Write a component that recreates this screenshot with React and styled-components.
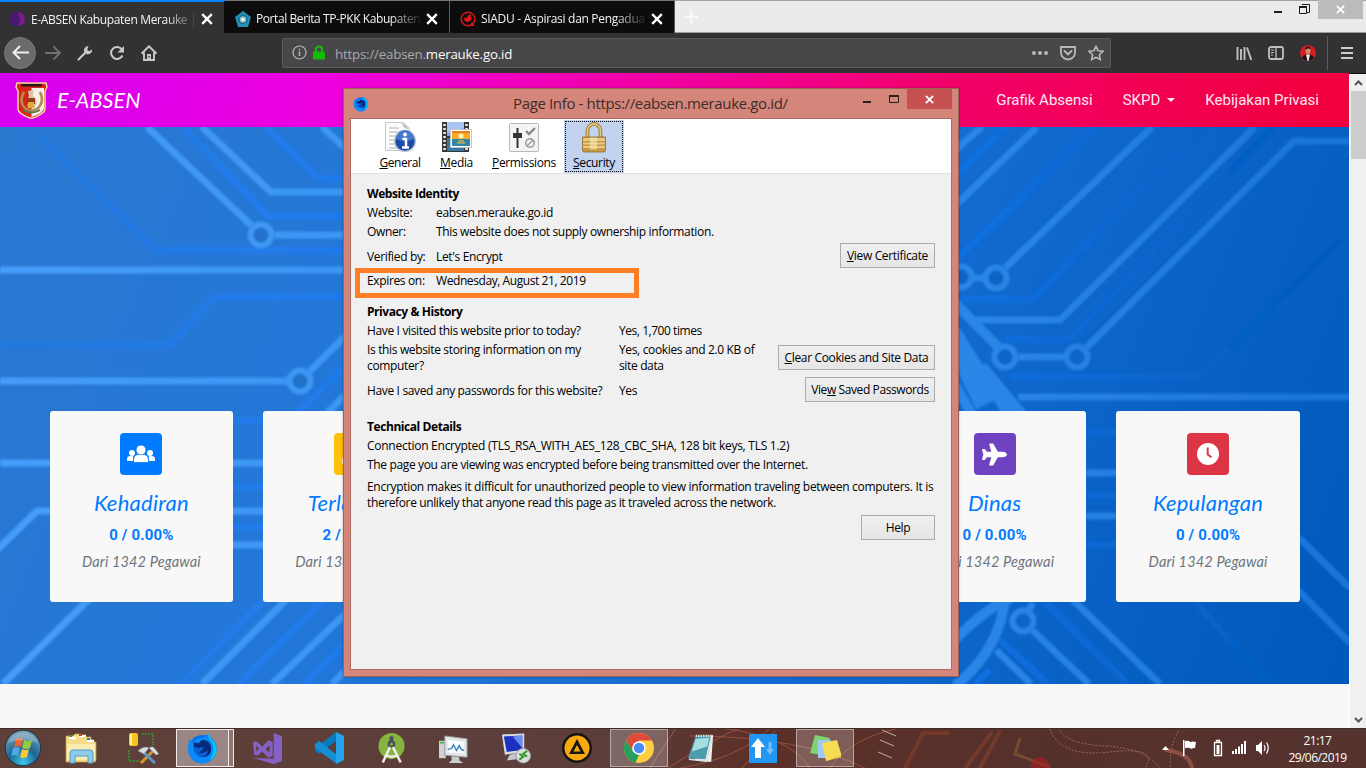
import React from "react";
import styled, { createGlobalStyle, css } from "styled-components";
import { FaPlane, FaUserClock } from "react-icons/fa";

const UI = `"Open Sans", "Noto Sans", sans-serif`;
const HAND = `Lato, "Open Sans", sans-serif`;

const Global = createGlobalStyle`
  * { box-sizing: border-box; }
  body { margin: 0; overflow: hidden; font-family: ${UI}; }
`;

const Screen = styled.div`
  position: relative;
  width: 1366px;
  height: 768px;
  display: flex;
  flex-direction: column;
  overflow: hidden;
  background: #f8f8f8;
`;

/* ---------- browser chrome ---------- */
const TabStrip = styled.header`
  height: 33px;
  display: flex;
  background: #ebebeb;
  border-top: 1px solid #a2a2a2;
  border-bottom: 1px solid #9d9d9d;
`;
const Tab = styled.div`
  width: 225px;
  height: 33px;
  margin-top: -1px;
  padding: 3px 10px 0 10px;
  display: flex;
  align-items: center;
  color: #f4f4f4;
  background: ${(p) => (p.$active ? "#323234" : "#0c0c0d")};
  border-top: ${(p) => (p.$active ? "2px solid #0a84ff" : "1px solid #777")};
  border-right: 1px solid ${(p) => (p.$active ? "#0c0c0d" : "#5a5a5c")};
`;
const TabTitle = styled.span`
  width: 167px;
  margin-left: 5px;
  overflow: hidden;
  white-space: nowrap;
  font-size: 12px;
  letter-spacing: ${(p) => p.$ls || "-0.35px"};
  mask-image: linear-gradient(90deg, #000 80%, transparent 100%);
`;
const TabClose = styled.span`
  display: flex;
  margin-left: 3px;
  flex: none;
`;
const NewTab = styled.div`
  width: 32px;
  display: flex;
  align-items: center;
  justify-content: center;
`;
const WindowButtons = styled.div`
  margin-left: auto;
  height: 19px;
  margin-top: -1px;
  display: flex;
`;
const WinClose = styled.div`
  width: 45px;
  margin-right: 3px;
  display: flex;
  align-items: center;
  justify-content: center;
  background: #bcbcbc;
`;
const WinGlyphs = styled.svg`
  margin-right: 8px;
`;

const Toolbar = styled.nav`
  height: 41px;
  flex: none;
  display: flex;
  align-items: center;
  padding: 0 11px 1px 4px;
  background: #323234;
  border-bottom: 1px solid #0c0c0d;
`;
const BackButton = styled.div`
  width: 32px;
  height: 32px;
  border-radius: 50%;
  display: flex;
  align-items: center;
  justify-content: center;
  background: #6b6b6c;
  border: 1px solid #7a7a7b;
`;
const ToolIcon = styled.svg`
  width: 16px;
  height: 16px;
  flex: none;
  margin-left: ${(p) => p.$gap || 16}px;
`;
const UrlBar = styled.div`
  width: 829px;
  height: 30px;
  margin-left: 125px;
  padding: 0 6px 0 9px;
  display: flex;
  align-items: center;
  border: 1px solid #5a5a5c;
  border-radius: 2px;
  background: #474749;
`;
const Lock = styled.svg`
  margin-left: 4px;
`;
const Url = styled.span`
  margin: 0 auto 0 10px;
  padding-top: 2px;
  font-size: 13.3px;
  letter-spacing: -0.2px;
  color: #a9a9ab;
  b { font-weight: 400; color: #fafafa; }
`;
const Divider = styled.i`
  width: 1px;
  height: 34px;
  margin-left: 11px;
  background: #5b5b5d;
`;
const RightTools = styled.div`
  margin-left: auto;
  display: flex;
  align-items: center;
`;

/* ---------- web page ---------- */
const Viewport = styled.div`
  height: 654px;
  display: flex;
`;
const Page = styled.main`
  width: 1349px;
  display: flex;
  flex-direction: column;
  margin-top: -1px;
`;
const SiteNav = styled.div`
  height: 54px;
  padding: 0 30px 0 15px;
  display: flex;
  align-items: center;
  color: #fff;
  background: linear-gradient(100deg, #d500f0 0%, #ee00e0 24%, #f2009c 52%, #f2006a 70%, #f20040 97%);
`;
const Brand = styled.span`
  margin-left: 9px;
  font: italic 400 21.5px ${HAND};
  letter-spacing: 0.1px;
`;
const NavLink = styled.span`
  font: 400 15px Roboto, sans-serif;
  margin-left: ${(p) => p.$gap || 0}px;
  color: #ffe8f0;
`;
const Links = styled.div`
  margin-left: auto;
  display: flex;
  align-items: center;
`;
const Caret = styled.i`
  margin-left: 7px;
  border: 4px solid transparent;
  border-top-color: #ffe8f0;
  border-bottom: 0;
`;
const Hero = styled.section`
  position: relative;
  height: 557px;
  padding: 284px 49.3px 0 49.7px;
  background: linear-gradient(112deg, #2a78d0 0%, #2277d9 32%, #1269cf 65%, #0058ba 100%);
`;
const Circuit = styled.svg`
  position: absolute;
  inset: 0;
`;
const Cards = styled.div`
  position: relative;
  display: grid;
  grid-template-columns: repeat(6, 1fr);
  gap: 30px;
`;
const Card = styled.article`
  height: 191px;
  padding-top: 22px;
  display: flex;
  flex-direction: column;
  align-items: center;
  white-space: nowrap;
  border-radius: 3px;
  background: #f8f8f8;
`;
const CardIcon = styled.div`
  width: 42px;
  height: 42px;
  display: flex;
  align-items: center;
  justify-content: center;
  border-radius: 4px;
  color: #fff;
  background: ${(p) => p.$color};
`;
const CardTitle = styled.h3`
  margin: 14px 0 0;
  font: italic 400 22px/28px ${HAND};
  letter-spacing: 0.25px;
  color: #007bff;
`;
const CardValue = styled.p`
  margin: 6px 0 0;
  font: 700 15px/24px Roboto, sans-serif;
  letter-spacing: 0.15px;
  color: #007bff;
`;
const CardNote = styled.p`
  margin: 3px 0 0;
  font: italic 400 14.5px/24px ${HAND};
  letter-spacing: 0.15px;
  color: #6c757d;
`;
const Scrollbar = styled.div`
  width: 17px;
  display: flex;
  flex-direction: column;
  align-items: center;
  padding: 0 1px;
  background: #f0f0f0;
  border-left: 1px solid #fff;
`;
const Thumb = styled.div`
  width: 15px;
  height: 68px;
  background: #cdcdcd;
`;
const ScrollArrow = styled.svg`
  width: 15px;
  height: 17px;
  margin-top: ${(p) => (p.$end ? "auto" : 0)};
`;

/* ---------- dialog ---------- */
const Dialog = styled.section`
  position: absolute;
  left: 343px;
  top: 88px;
  width: 616px;
  height: 589px;
  padding: 0 6px 6px;
  display: flex;
  flex-direction: column;
  border: 1px solid #9d625a;
  background: #d5867a;
  box-shadow: 0 0 2px #0005;
`;
const TitleBar = styled.div`
  height: 29px;
  display: flex;
  align-items: flex-start;
  padding-left: 3px;
`;
const TitleIcon = styled.svg`
  width: 16px;
  height: 16px;
  margin-top: 7px;
`;
const DialogTitle = styled.h1`
  flex: 1;
  margin: 0;
  padding-left: 144px;
  font: 400 15px/29px ${UI};
  letter-spacing: -0.36px;
  white-space: nowrap;
  color: #3d2c2a;
`;
const DialogGlyphs = styled.svg`
  margin-right: 7px;
`;
const DialogClose = styled.div`
  width: 45px;
  height: 20px;
  display: flex;
  align-items: center;
  justify-content: center;
  background: #c75050;
`;
const Client = styled.div`
  flex: 1;
  border: 1px solid #ae6b62;
  background: #f0f0f0;
`;
const Categories = styled.div`
  height: 55px;
  padding: 1px 0 0 20px;
  display: flex;
  background: #fff;
  border-bottom: 1px solid #e0e0e0;
`;
const Category = styled.div`
  width: ${(p) => p.$w}px;
  height: 53px;
  padding-top: 1px;
  display: flex;
  flex-direction: column;
  align-items: center;
  font-size: 12px;
  line-height: 20px;
  letter-spacing: ${(p) => p.$ls || "-0.35px"};
  ${(p) =>
    p.$active &&
    css`
      background: #c2d3ef;
      outline: 1px dotted #000;
      outline-offset: -2px;
    `}
`;
const CategoryIcon = styled.svg`
  width: 32px;
  height: 32px;
`;
const Details = styled.div`
  padding: 10px 16px 0;
  display: flex;
  flex-direction: column;
  font-size: 12px;
  line-height: 16px;
  letter-spacing: -0.35px;
  color: #000;
`;
const Heading = styled.h2`
  height: 20px;
  margin: ${(p) => p.$gap || 0}px 0 0;
  font: 700 12px/20px ${UI};
  letter-spacing: -0.43px;
`;
const Row = styled.div`
  height: ${(p) => p.$h}px;
  display: flex;
  align-items: center;
  letter-spacing: ${(p) => p.$ls || "inherit"};
`;
const Label = styled.span`
  width: ${(p) => p.$w || 69}px;
  padding-top: ${(p) => p.$drop || 0}px;
  flex: none;
`;
const Value = styled.span`
  max-width: 145px;
  padding-top: ${(p) => p.$drop || 0}px;
  letter-spacing: ${(p) => p.$ls || "inherit"};
  white-space: nowrap;
`;
const Button = styled.button`
  width: ${(p) => p.$w}px;
  height: 25px;
  margin: ${(p) => p.$mt ?? -2}px 0 0 auto;
  padding: 0;
  border: 1px solid #acacac;
  background: linear-gradient(#f0f0f0, #e5e5e5);
  font: 400 12px ${UI};
  letter-spacing: ${(p) => p.$ls || "-0.33px"};
  white-space: nowrap;
  color: #000;
`;
const Paragraph = styled.p`
  margin: 4px 0;
  white-space: nowrap;
`;
const Line = styled.span`
  display: block;
  letter-spacing: ${(p) => p.$ls};
`;
const Highlight = styled.div`
  position: absolute;
  left: 11px;
  top: 179px;
  width: 284px;
  height: 30px;
  border: 5px solid #ff7f27;
`;

/* ---------- taskbar ---------- */
const Taskbar = styled.footer`
  position: relative;
  height: 40px;
  flex: none;
  display: flex;
  align-items: center;
  background: linear-gradient(90deg, #5f4039, #5b3d3a 45%, #5c3028 55%, #56302b 75%, #55332f);
`;
const Wallpaper = styled.svg`
  position: absolute;
  inset: 0;
`;
const Start = styled.svg`
  position: relative;
  margin-left: 4px;
  flex: none;
`;
const Tasks = styled.div`
  position: relative;
  margin-left: 8px;
  display: flex;
`;
const Task = styled.div`
  width: 58px;
  height: 38px;
  margin: 0 2px;
  display: flex;
  align-items: center;
  justify-content: center;
  border: 1px solid transparent;
  ${(p) =>
    p.$open &&
    css`
      background: #ffffff38;
      border-color: #ffffff70;
    `}
  ${(p) =>
    p.$current &&
    css`
      padding-right: 5px;
      background: #ffffff60;
      border-color: #f2eceb;
      box-shadow: inset -4px 0 0 #8d7774, inset -5px 0 0 #f2eceb;
    `}
`;
const Tray = styled.svg`
  position: relative;
  margin-left: auto;
`;
const Clock = styled.div`
  position: relative;
  width: 97px;
  padding-top: 2px;
  text-align: center;
  color: #fff;
  font-size: 12px;
  line-height: 17px;
  letter-spacing: -0.55px;
`;

const X = ({ size = 9, width = 2, color = "#fff" }) => (
  <svg width={size} height={size} viewBox="0 0 10 10">
    <path d="M1 1l8 8M9 1l-8 8" stroke={color} strokeWidth={width} />
  </svg>
);

const Key = ({ children }) => <u>{children}</u>;

const PeopleIcon = () => (
  <svg width="28" height="18" viewBox="0 0 28 18" fill="#fff">
    <circle cx="5" cy="8" r="3" /><circle cx="23" cy="8" r="3" />
    <path d="M0 16v-2q0-3 3.500-3H6v5zM28 16v-2q0-3-3.500-3H22v5z" />
    <path d="M6.500 17.500v-3q0-4.500 4-5h7q4 .5 4 5v3z" stroke="#007bff" strokeWidth=".8" />
    <circle cx="14" cy="5" r="4.800" stroke="#007bff" strokeWidth=".5" />
  </svg>
);

const ClockIcon = () => (
  <svg width="22" height="22" viewBox="0 0 22 22">
    <circle cx="11" cy="11" r="11" fill="#fff" />
    <path d="M10.700 4.500v7l3.800 2.700" fill="none" stroke="#dc3545" strokeWidth="2" />
  </svg>
);

const FirefoxMark = () => (
  <>
    <circle cx="16" cy="17" r="14.500" fill="#0a6fe8" />
    <path d="M22 1c1 6 9 8 8.500 17C30 27 23 32 16 32 8 32 1 26 1 17L2 7l4 3c3-4 7-5 10-4z" fill="#0b8bfb" />
    <path d="M7 10l5 1 3-3c6-1 10 3 10 9s-5 9-10 8c-6-1-9-6-8-15z" fill="#062a7c" />
    <path d="M7 15l5 1 5-1-1 3-4 2q2 3 6 0l4-1c-2 6-8 7-12 4-2-2-3-5-3-8z" fill="#0b62d8" />
    <path d="M22 1c1 6 9 8 8.500 17-.5 5-3 9-7 11 4-7 5-14 2-19-3-4-4-5-3.500-9z" fill="#00c8ff" />
  </>
);

function CircuitLines() {
  const dots = [[261, 235], [300, 381], [961, 277], [996, 278], [1005, 357], [1077, 357], [1023, 621]];
  return (
    <Circuit width="1349" height="557" viewBox="0 127 1349 557" fill="none">
      <defs>
        <linearGradient id="trace" gradientUnits="userSpaceOnUse" x1="0" y1="0" x2="1349" y2="0">
          <stop offset="0" stopColor="#469dfa" />
          <stop offset="0.25" stopColor="#3d96f3" />
          <stop offset="0.75" stopColor="#2a85e6" />
          <stop offset="1" stopColor="#1b73d8" />
        </linearGradient>
        <linearGradient id="under" gradientUnits="userSpaceOnUse" x1="0" y1="0" x2="1349" y2="0">
          <stop offset="0" stopColor="#2277dd" />
          <stop offset="0.2" stopColor="#217bec" />
          <stop offset="0.72" stopColor="#1170e0" />
          <stop offset="1" stopColor="#0259bb" />
        </linearGradient>
        <filter id="soft" x="-5%" y="-5%" width="110%" height="110%"><feGaussianBlur stdDeviation="1" /></filter>
      </defs>
      <g stroke="url(#under)" strokeWidth="7" filter="url(#soft)">
        <path d="M183 127L268 216H345M266 127L318 178H345M40 137L155 250H345M0 345.100H170L213 297H345" />
        <path d="M298 412L345 366M233 421H263.100L264 421.100M233 487H263L264 487.100M233 527H263L264 527.100M266 598L180 684M323 600L238 684M345 644L305 684" />
        <path d="M955 176L1006 127M955 261L1094 127M959 299.100H1032L1203 127M1005 339.100H1070L1273 127M1010 377.100H1200L1340 240" />
        <path d="M1086 432H1116L1117 432.100M1086 495H1116L1117 495.100M1086 545H1116L1117 545.100M1045 602L1128 684M1000 640L1048 684M1195 602L1270 684M975 684L990 670" />
      </g>
      <g stroke="url(#trace)" strokeWidth="7" filter="url(#soft)">
        <path d="M147 127L252 226M274 235H345L346 235.100M202 127L271 192H345M322 127L345 148M0 270H345L346 270.100M0 381H288L289 381.100M309 372L345 336M327 413L345 395" />
        <path d="M0 463H345L346 463.100M-4 551L37 511H345M150 545H345L346 545.100M90 598L3 684M288 598L202 684M345 614L272 684M345 671L332 684" />
        <path d="M955 150L982 127M955 206L1037 127M1005 268L1152 127M970 278H986L987 278.100M975 320.100H1060L1255 127M1018 357H1065L1066 357.100M1086 348L1294 141H1349M1018 397H1349L1349 397.100" />
        <path d="M1086 473H1116L1117 473.100M1086 516H1116L1117 516.100M1298 537L1350 588M1298 590L1350 643M1033 603L1028 611M1032 630L1089 684M1073 600L1160 684M996 650L1031 684" />
      </g>
      <g stroke="url(#trace)" strokeWidth="10" filter="url(#soft)">
        <path d="M955 303L1000 349M955 330L1012 420M982 366L1027 420M955 385L975 420M1012 598Q985 608 955 640M1005 598Q1000 650 955 686" />
        <path d="M955 342L985 405" strokeWidth="20" />
      </g>
      <g stroke="url(#trace)" strokeWidth="6" filter="url(#soft)">
        {dots.map(([x, y]) => (
          <circle key={`${x}-${y}`} cx={x} cy={y} r="10.500" fill={x < 400 ? "#2171cb" : "#0d64c6"} />
        ))}
      </g>
    </Circuit>
  );
}

const cards = [
  { title: "Kehadiran", value: "0 / 0.00%", color: "#007bff", icon: <PeopleIcon /> },
  { title: "Terlambat", value: "2 / 0.15%", color: "#ffc107", icon: <FaUserClock size={26} /> },
  null,
  null,
  { title: "Dinas", value: "0 / 0.00%", color: "#6f42c1", icon: <FaPlane size={25} /> },
  { title: "Kepulangan", value: "0 / 0.00%", color: "#dc3545", icon: <ClockIcon /> },
];

function BrowserTop() {
  return (
    <>
      <TabStrip>
        <Tab $active>
          <svg width="16" height="16"><circle cx="7" cy="8" r="7.500" fill="#47186e" /><path d="M8 1a7 7 0 0 1 0 14c4-5 1-8 0-14" fill="#7c1c8c" /></svg>
          <TabTitle>E-ABSEN Kabupaten Merauke |</TabTitle>
          <TabClose><X size={12} /></TabClose>
        </Tab>
        <Tab>
          <svg width="16" height="16"><path d="M8 0l8 6-3 10H3L0 6z" fill="#2490b5" /><circle cx="8" cy="8.500" r="4" fill="#8bc6c4" stroke="#1a6791" strokeWidth="1.500" /><circle cx="8" cy="8.500" r="1.500" fill="#fff" /></svg>
          <TabTitle $ls="-0.42px">Portal Berita TP-PKK Kabupaten</TabTitle>
          <TabClose><X size={12} /></TabClose>
        </Tab>
        <Tab>
          <svg width="16" height="16"><circle cx="8" cy="8" r="6.800" fill="none" stroke="#d51518" strokeWidth="1.500" /><path d="M4 6c1 2 3 1 4-1 2-3 4-1 3 0 1 2 1 5-3 6-3 0-4-2-4-5zM11 11l4 4h-4z" fill="#e31519" /></svg>
          <TabTitle $ls="-0.3px">SIADU - Aspirasi dan Pengadua</TabTitle>
          <TabClose><X size={12} /></TabClose>
        </Tab>
        <NewTab><svg width="14" height="14"><path d="M7 0v14M0 7h14" stroke="#fafafa" strokeWidth="2" /></svg></NewTab>
        <WindowButtons>
          <WinGlyphs width="38" height="19" fill="none" stroke="#1c1c1c">
            <path d="M2 12h8" strokeWidth="2" />
            <path d="M30 5V4.500h7.500v8H35" /><path d="M27.500 7.500h7v6h-7z" /><path d="M27 7h8" strokeWidth="2" />
          </WinGlyphs>
          <WinClose><X size={9} /></WinClose>
        </WindowButtons>
      </TabStrip>
      <Toolbar>
        <BackButton>
          <svg width="17" height="15" fill="none" stroke="#f0f0f0" strokeWidth="2"><path d="M1 7.500h16M8 1L1.500 7.500 8 14" /></svg>
        </BackButton>
        <ToolIcon $gap={9} viewBox="0 0 16 16" fill="none" stroke="#727274" strokeWidth="1.800"><path d="M0 8h15M8.500 1.500L15 8l-6.500 6.500" /></ToolIcon>
        <ToolIcon viewBox="0 0 16 16"><path d="M1.500 14.500L8.500 7.500" stroke="#c9c9ca" strokeWidth="2.200" strokeLinecap="round" /><path d="M11.500 1A4.500 4.500 0 0 0 7 6.500L9.500 9A4.500 4.500 0 0 0 15.300 4.500L12.500 6 10.500 5.500V3.500z" fill="#c9c9ca" /></ToolIcon>
        <ToolIcon viewBox="0 0 16 16" fill="none" stroke="#c9c9ca" strokeWidth="2"><path d="M13.500 10.500a6 6 0 1 1-.5-6" /><path d="M15 1v6.500H8.500z" fill="#c9c9ca" stroke="none" /></ToolIcon>
        <ToolIcon viewBox="0 0 16 16" fill="none" stroke="#c9c9ca" strokeWidth="1.900"><path d="M.5 8.700L8 1.300l7.500 7.400M3 7.500V15h10V7.500" /><path d="M6 9h4v6H6z" fill="#c9c9ca" stroke="none" /><path d="M8 11v1.500" stroke="#323234" strokeWidth="1.300" /></ToolIcon>
        <UrlBar>
          <svg width="15" height="15" fill="none" stroke="#b9b9ba" strokeWidth="1.200"><circle cx="7.500" cy="7.500" r="6.500" /><path d="M7.500 6.500V11M7.500 3.800v1.500" strokeWidth="1.500" /></svg>
          <Lock width="14" height="15"><path d="M5 7V4.500a3 3 0 0 1 6 0V7" fill="none" stroke="#12bc00" strokeWidth="2" /><rect x="2" y="6.500" width="12" height="8" rx="1" fill="#12bc00" /></Lock>
          <Url>https://eabsen.<b>merauke.go.id</b></Url>
          <ToolIcon viewBox="0 0 16 16" fill="#b8b8b9"><circle cx="2" cy="8" r="2" /><circle cx="8" cy="8" r="2" /><circle cx="14" cy="8" r="2" /></ToolIcon>
          <ToolIcon $gap={12} viewBox="0 0 16 16" fill="none" stroke="#b8b8b9" strokeWidth="1.800"><path d="M1 2h14v5.500a7 7 0 0 1-14 0z" /><path d="M4.500 6L8 9.300 11.500 6" strokeWidth="2" strokeLinecap="round" /></ToolIcon>
          <ToolIcon $gap={12} viewBox="0 0 16 16" fill="none" stroke="#b8b8b9" strokeWidth="1.600"><path d="M8 1.300l2.100 4.400 4.900.6-3.600 3.400.9 4.900L8 12.200l-4.300 2.400.9-4.900L1 6.300l4.900-.6z" /></ToolIcon>
        </UrlBar>
        <RightTools>
          <ToolIcon viewBox="0 0 16 16" fill="none" stroke="#c0c0c2" strokeWidth="1.900"><path d="M1.500 2v13M5 4v11M8.500 2v13M11 2.500L15.300 15" /></ToolIcon>
          <ToolIcon viewBox="0 0 16 16" fill="none" stroke="#c0c0c2" strokeWidth="1.800"><rect x="1" y="2" width="14" height="12" rx="2" /><path d="M8 2v12" strokeWidth="1.300" /><path d="M3 5h3M3 7.500h3M3 10h2" strokeWidth="1" /></ToolIcon>
          <ToolIcon viewBox="0 0 16 16"><circle cx="8" cy="8" r="8" fill="#d51d20" /><path d="M2 13Q3 10 6 9.500h4q3 .5 4 3.500-6 6-12 0" fill="#171516" /><path d="M6 9.500h4L8.500 16h-1z" fill="#eee" /><ellipse cx="8" cy="5.500" rx="2.500" ry="3.500" fill="#cc8d6b" /><path d="M5.300 5C5 0 11 0 10.700 5 10 3 7 3 5.300 5" fill="#181214" /></ToolIcon>
          <Divider />
          <ToolIcon $gap={11} viewBox="0 0 16 16"><path d="M2 3h12M2 8h12M2 13h12" stroke="#cdcdce" strokeWidth="1.900" /></ToolIcon>
        </RightTools>
      </Toolbar>
    </>
  );
}

function WebPage() {
  return (
    <Viewport>
      <Page>
        <SiteNav>
          <svg width="33" height="37" viewBox="0 0 33 37">
            <path d="M2 1h29l1 4-2 4v18q0 5-13.500 9.500Q3 32 3 27V9L1 5z" fill="#d9241b" stroke="#f3d3a4" strokeWidth="1.500" />
            <path d="M16.500 6H29v20q0 5-12.500 9z" fill="#f5efe8" />
            <path d="M6 2h21v2.500H6z" fill="#261a12" />
            <path d="M9 10Q3 20 11 27l5 2 6-2Q30 20 25 10" fill="none" stroke="#b38b4b" strokeWidth="2.500" />
            <path d="M13 26q-2-8 1-12l-1-5 6-1q-3 4 1 8t-1 10z" fill="#d8c6a1" />
            <path d="M12 16h8v6h-8z" fill="#9b3a1a" /><path d="M13 20h6v6h-6z" fill="#e1ab38" />
            <path d="M8 28q8 5 17 0" fill="none" stroke="#5d7c4d" strokeWidth="2" />
          </svg>
          <Brand>E-ABSEN</Brand>
          <Links>
            <NavLink>Grafik Absensi</NavLink>
            <NavLink $gap={30}>SKPD</NavLink>
            <Caret />
            <NavLink $gap={30}>Kebijakan Privasi</NavLink>
          </Links>
        </SiteNav>
        <Hero>
          <CircuitLines />
          <Cards>
            {cards.map((c, i) =>
              c ? (
                <Card key={i}>
                  <CardIcon $color={c.color}>{c.icon}</CardIcon>
                  <CardTitle>{c.title}</CardTitle>
                  <CardValue>{c.value}</CardValue>
                  <CardNote>Dari 1342 Pegawai</CardNote>
                </Card>
              ) : (
                <Card key={i} />
              )
            )}
          </Cards>
        </Hero>
      </Page>
      <Scrollbar>
        <ScrollArrow><path d="M4 11l3.500-3.500L11 11" fill="none" stroke="#555" strokeWidth="2" /></ScrollArrow>
        <Thumb />
        <ScrollArrow $end><path d="M4 7l3.500 3.500L11 7" fill="none" stroke="#555" strokeWidth="2" /></ScrollArrow>
      </Scrollbar>
    </Viewport>
  );
}

function PageInfo() {
  return (
    <Dialog>
      <TitleBar>
        <TitleIcon viewBox="0 0 32 33"><FirefoxMark /></TitleIcon>
        <DialogTitle>Page Info - https://eabsen.merauke.go.id/</DialogTitle>
        <DialogGlyphs width="40" height="20" fill="none" stroke="#2b2020">
          <path d="M3 13h8" strokeWidth="2" /><path d="M29.500 6.500h9v7h-9z" /><path d="M29 7h10" strokeWidth="2" />
        </DialogGlyphs>
        <DialogClose><X size={9} /></DialogClose>
      </TitleBar>
      <Client>
        <Categories>
          <Category $w={58} $ls="-0.45px">
            <CategoryIcon viewBox="0 0 32 32">
              <path d="M1.500 1.500h18l6 6v22h-24z" fill="#fbfbfb" stroke="#c9c9c9" /><path d="M18 2q1 6 7 6l-6-6z" fill="#bbb" />
              <path d="M5 7h10M5 11h16M5 15h8M5 19h6M5 23h6M5 27h8" stroke="#b2b2b2" />
              <circle cx="21" cy="20" r="10.500" fill="#1a4cae" stroke="#c3c9d3" strokeWidth="1.500" /><path d="M12 18a9 9 0 0 1 18 0q-9 4-18 0" fill="#4777cb" />
              <path d="M18.500 18h3.500v8M18 26.500h7" stroke="#fff" strokeWidth="2.500" fill="none" /><circle cx="21" cy="13.500" r="1.900" fill="#fff" />
            </CategoryIcon>
            <span><Key>G</Key>eneral</span>
          </Category>
          <Category $w={55}>
            <CategoryIcon viewBox="0 0 32 32">
              <path d="M1 1h27v30H1z" fill="#33383c" /><path d="M6 1h17v14H6z" fill="#7aa2e8" /><path d="M6 1h17v6L6 12z" fill="#a9c5f3" /><path d="M6 17h17v13H6z" fill="#3b78a0" />
              <path d="M3.500 3v28M25.500 3v28" stroke="#eee" strokeWidth="2.500" strokeDasharray="2 2" />
              <path d="M9.500 8.500h21v18h-21z" fill="#fff" stroke="#c5c5c5" /><path d="M11 10h18v8H11z" fill="#f6a928" /><path d="M11 18h18v7H11z" fill="#2e87a4" />
              <circle cx="20" cy="15" r="2.600" fill="#fff4b0" /><path d="M17 20h6M16 22h8" stroke="#ffc14e" /><path d="M11 11h18" stroke="#e98020" strokeWidth="2" />
            </CategoryIcon>
            <span><Key>M</Key>edia</span>
          </Category>
          <Category $w={80}>
            <CategoryIcon viewBox="0 0 32 32">
              <rect x="1.500" y="2.500" width="29" height="28" rx="1" fill="#f4f4f4" stroke="#b9b9b9" /><path d="M9.500 7v20" stroke="#333" strokeWidth="2" /><path d="M5 12h9v5H5z" fill="#333" />
              <path d="M18 10l3 3 6-6" fill="none" stroke="#888" strokeWidth="2.300" /><circle cx="22" cy="22" r="4.200" fill="none" stroke="#999" strokeWidth="1.500" /><path d="M19 25l6-6" stroke="#999" strokeWidth="1.500" />
            </CategoryIcon>
            <span><Key>P</Key>ermissions</span>
          </Category>
          <Category $w={60} $active>
            <CategoryIcon viewBox="0 0 32 32">
              <path d="M9.500 16V9.500a6.500 6.500 0 0 1 13 0V16" fill="none" stroke="#8c6b22" strokeWidth="3.600" /><path d="M9.500 16V9.500a6.500 6.500 0 0 1 13 0V16" fill="none" stroke="#e2c573" strokeWidth="2" />
              <path d="M4.500 16h23v13q0 2-2 2h-19q-2 0-2-2z" fill="#c69a45" stroke="#8d6b26" strokeWidth=".8" /><path d="M5 17h22v3H5zM5 21.500h22v2H5zM5 25h22v2H5z" fill="#e6ca85" /><path d="M12 16.500h7v12h-7z" fill="#fff3bc" opacity=".5" />
            </CategoryIcon>
            <span><Key>S</Key>ecurity</span>
          </Category>
        </Categories>
        <Details>
          <Heading>Website Identity</Heading>
          <Row $h={18}><Label>Website:</Label><Value>eabsen.merauke.go.id</Value></Row>
          <Row $h={20}><Label>Owner:</Label><Value>This website does not supply ownership information.</Value></Row>
          <Row $h={28}><Label $drop={2}>Verified by:</Label><Value $drop={2}>Let's Encrypt</Value><Button $w={95}><Key>V</Key>iew Certificate</Button></Row>
          <Row $h={22}><Label>Expires on:</Label><Value $ls="-0.42px">Wednesday, August 21, 2019</Value></Row>
          <Heading $gap={10}>Privacy &amp; History</Heading>
          <Row $h={18}><Label $w={252}>Have I visited this website prior to today?</Label><Value $ls="-0.45px">Yes, 1,700 times</Value></Row>
          <Row $h={36}><Label $w={252}>Is this website storing information on my<br />computer?</Label><Value>Yes, cookies and 2.0 KB of<br />site data</Value><Button $w={157} $ls="-0.36px"><Key>C</Key>lear Cookies and Site Data</Button></Row>
          <Row $h={29}><Label $w={252}>Have I saved any passwords for this website?</Label><Value>Yes</Value><Button $w={130} $ls="-0.4px">Vie<Key>w</Key> Saved Passwords</Button></Row>
          <Heading $gap={12}>Technical Details</Heading>
          <Row $h={18} $ls="-0.26px">Connection Encrypted (TLS_RSA_WITH_AES_128_CBC_SHA, 128 bit keys, TLS 1.2)</Row>
          <Row $h={20}>The page you are viewing was encrypted before being transmitted over the Internet.</Row>
          <Paragraph>
            <Line $ls="-0.3px">Encryption makes it difficult for unauthorized people to view information traveling between computers. It is</Line>
            <Line $ls="-0.38px">therefore unlikely that anyone read this page as it traveled across the network.</Line>
          </Paragraph>
          <Button $w={74} $mt={0}>Help</Button>
        </Details>
      </Client>
      <Highlight />
    </Dialog>
  );
}

const icon = (children, w = 34, h = 34) => (
  <svg width={w} height={h} viewBox="0 0 32 32">{children}</svg>
);

const tasks = [
  { art: icon(<><path d="M1 4h7l2-2h6l2 3h8v5h5v18q0 2-2 2H1z" fill="#f4dc8b" stroke="#c9a343" strokeWidth=".7" /><path d="M4 6h7M14 4h7M22 9h7" stroke="#fff" strokeWidth="2.500" /><path d="M4 4h3" stroke="#29a046" strokeWidth="2" /><path d="M14 3h3" stroke="#df3e26" strokeWidth="2" /><path d="M22 7h3" stroke="#2b7fd0" strokeWidth="2" /><path d="M2 12h28v16H2z" fill="#fbedb2" /><path d="M5 31V21q0-3 3-3h17q3 0 3 3v10h-5v-7H10v7z" fill="#8fcbea" stroke="#4b9ac8" /></>, 32, 32) },
  { art: icon(<><rect x="2" y="1" width="9" height="13" rx="2" fill="#f3c51c" /><path d="M4 2v11" stroke="#fff2a0" strokeWidth="2" /><path d="M15 2h11v11M2 18v11h11" fill="none" stroke="#2c9c29" strokeWidth="1.500" strokeDasharray="2 1" /><path d="M14 31L27 18" stroke="#d09a31" strokeWidth="3" /><path d="M14 18l14 13" stroke="#5a95c9" strokeWidth="3" /><path d="M11 19q6-6 11-3l-5 6zM22 16q4-3 6 1l4 5-3 1z" fill="#d8dde1" stroke="#7c8287" strokeWidth=".6" /></>, 32, 32) },
  { art: icon(<FirefoxMark />, 31, 32), current: true },
  { art: icon(<><path d="M22 1l8 3v24l-8 3L1 25l21 1z" fill="#8661c5" /><path d="M2 10l3-1 6 5 6-6 4 2v13l-4 2-6-6-5 4-3-1zM5 13v6l3-3zM14 16.500l4 3.500v-7z" fill="#8661c5" fillRule="evenodd" /></>, 33, 33) },
  { art: icon(<><path d="M23 0v9L6 22l-4-3v-3z" fill="#0879bd" /><path d="M2 12l4-3 18 14v9L2 16z" fill="#1590d6" /><path d="M23 0l8 4v24l-8 4z" fill="#27a4ef" /></>, 32, 32) },
  { art: icon(<><circle cx="16" cy="14" r="13.500" fill="#86b441" /><path d="M16 4v6" stroke="#46535b" strokeWidth="4" /><circle cx="16" cy="12" r="4" fill="#46535b" /><circle cx="16" cy="12" r="1.500" fill="#86b441" /><path d="M14.500 15L7 31M17.500 15l8 16M9 23q7 4 14 0" fill="none" stroke="#eee" strokeWidth="2.600" /></>, 31, 32) },
  { art: icon(<><path d="M1 8h7v18H1z" fill="#cfd3d5" /><path d="M2 10h4" stroke="#43bd3e" strokeWidth="2" /><path d="M7 3l23 3v19L7 23z" fill="#e3e5e6" stroke="#919799" /><path d="M10 7l17 2v12L10 20z" fill="#f8fbff" /><path d="M10 17l4-1 2-4 3 6 3-5 2 4 3 1" fill="none" stroke="#2c76b6" strokeWidth="1.300" /><path d="M14 24l8 1v3l4 3H11l3-3z" fill="#c8cccd" /></>, 31, 31) },
  { art: icon(<><path d="M2 2l23-1v19L5 23z" fill="#d9dde3" /><path d="M4 4l19-1v15L7 20z" fill="#1c31be" /><path d="M13 4l10-1v13z" fill="#6b8af2" /><path d="M10 23l8-2 2 6-13 2z" fill="#c4c8cc" /><circle cx="24" cy="24" r="7.500" fill="#dedede" stroke="#989898" /><path d="M20 22l4 3-4 3M28 19l-4 3 4 3" fill="none" stroke="#2a962c" strokeWidth="2" /></>, 31, 32) },
  { art: icon(<><circle cx="16" cy="16" r="15" fill="#151515" /><circle cx="16" cy="16" r="12.500" fill="#f8a90d" /><path d="M16 7l8 15H8z" fill="#171717" /><path d="M16 13l3.500 6.500h-7z" fill="#f8a90d" /></>, 32, 32) },
  { art: icon(<><circle cx="16" cy="16" r="15" fill="#ffcd40" /><path d="M3 8.500A15 15 0 0 1 29 8.500H16L10 19.500z" fill="#dd4a3b" /><path d="M3 8.500L10 19.500l6 3.500-3.500 7.600A15 15 0 0 1 3 8.500z" fill="#22a05c" /><circle cx="16" cy="16" r="6.800" fill="#fff" /><circle cx="16" cy="16" r="5.300" fill="#4a8af4" /></>, 32, 32), open: true },
  { art: icon(<><path d="M11 4l17-2-2 28-17-2z" fill="#eceeed" /><path d="M10 3l16-1-6 25-18-1z" fill="#4b9dad" /><path d="M10 6l14-1-2 9-16 5z" fill="#a7dde1" /><path d="M10 3h17" stroke="#ddd" strokeWidth="2.500" strokeDasharray="1.500 1" /><path d="M3 27l18 2 5-23" fill="none" stroke="#d5e4e4" strokeWidth="1.500" /></>, 31, 31) },
  { art: icon(<><path d="M2 2h28v29H2z" fill="#2196f3" /><path d="M11 6l7 9h-4v11H8V15H4z" fill="#fff" /><path d="M23 23l-4-6h2.500v-7h3v7H27z" fill="#73bdf8" /></>, 32, 32) },
  { art: icon(<><path d="M6 3l15 3-4 18-16-3z" fill="#7ed46e" /><path d="M9 8h13v18H9z" fill="#9ecbf6" /><path d="M13 11l15-3 5 17-16 4z" fill="#f6dc51" /><path d="M17 29l11-4 5-1-16 5z" fill="#cca42a" /></>, 32, 32), open: true },
];

function DesktopBar() {
  return (
    <Taskbar>
      <Wallpaper width="1366" height="40" fill="none">
        <path d="M668 40Q715 10 740 0M680 40Q740 30 770 0M690 8Q800 8 865 40M720 0Q790 8 810 40M830 40Q850 10 900 0" stroke="#95503f" />
        <path d="M650 40L676 0M742 40L775 3" stroke="#c78b79" opacity=".5" />
        <path d="M905 40L923 5H950M965 40L992 4M980 40L1000 3" stroke="#a0492e" strokeWidth="4" opacity=".4" />
        <path d="M1020 10l-5 16 35 13" stroke="#9b6335" strokeWidth="3" opacity=".5" />
        <path d="M1050 1Q1060 30 1110 24T1145 40M1059 0Q1065 16 1105 18T1160 40M1180 0q-12 20-9 40" stroke="#9b6a55" strokeDasharray="2 1.500" />
        <path d="M882 2l14 6M880 12l14 6M878 24l14 6" stroke="#c9aaa2" />
        <circle cx="1040" cy="38" r="9" fill="#a61e20" opacity=".6" />
        <path d="M1165 22q25 3 27 18" stroke="#c26c5d" strokeWidth="4" opacity=".5" />
        <path d="M0 .5H1366" stroke="#3d2926" />
      </Wallpaper>
      <Start width="38" height="38" viewBox="0 0 38 38">
        <defs><radialGradient id="orb" cx=".5" cy=".9" r=".9"><stop offset="0" stopColor="#3ec6ee" /><stop offset=".45" stopColor="#1d6691" /><stop offset="1" stopColor="#7fa6bd" /></radialGradient></defs>
        <circle cx="19" cy="19" r="17.800" fill="url(#orb)" stroke="#193345" />
        <path d="M12 10q4-2 7 0l-2 8q-4-2-7 0z" fill="#ee6436" /><path d="M20 11q4 2 8 0l-2 8q-4 2-8 0z" fill="#95c843" /><path d="M9 19q4-2 7 0l-2 8q-4-2-7 0z" fill="#4da8e5" /><path d="M18 20q4 2 7 0l-2 8q-4 2-7 0z" fill="#fcc836" />
        <path d="M4 14a16 16 0 0 1 30 0Q19 8 4 14" fill="#fff" opacity=".25" />
      </Start>
      <Tasks>
        {tasks.map((t, i) => (
          <Task key={i} $open={t.open} $current={t.current}>{t.art}</Task>
        ))}
      </Tasks>
      <Tray width="110" height="22" fill="#fff">
        <path d="M3 13l3.500-4 3.500 4z" />
        <path d="M24 3h1.500v16H24zM26 4q4-1 5 1 3-1 6 0l-1 6q-3 0-4 1-1-2-6-1z" />
        <path d="M55.500 5.500h7v13h-7zM57.500 3.500h3v2h-3z" fill="none" stroke="#fff" strokeWidth="1.300" /><path d="M57.500 8h3v9h-3z" />
        <path d="M73 14h2v3h-2zM76 12h2v5h-2zM79 9.500h2V17h-2zM82 7h2v10h-2zM85 4h2v13h-2z" />
        <path d="M97 8h2l4-4v14l-4-4h-2z" /><path d="M105 8q2 3 0 6M107.500 5.500q3.500 5 0 11" fill="none" stroke="#fff" strokeWidth="1.200" />
      </Tray>
      <Clock>21:17<br />29/06/2019</Clock>
    </Taskbar>
  );
}

export default function App() {
  return (
    <Screen>
      <Global />
      <BrowserTop />
      <WebPage />
      <DesktopBar />
      <PageInfo />
    </Screen>
  );
}
